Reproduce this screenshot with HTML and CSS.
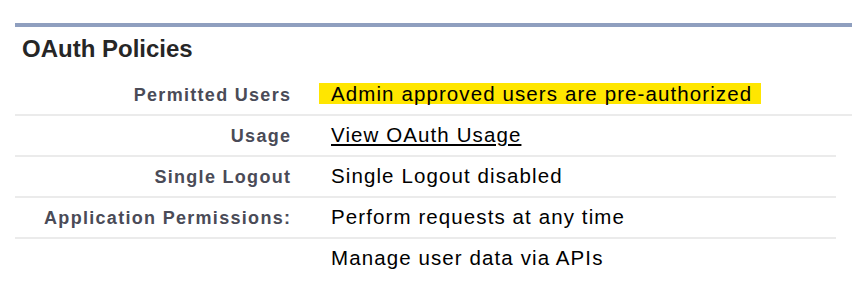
FILE: index.html
```html
<!DOCTYPE html>
<html lang="en">
<head>
  <meta charset="UTF-8" />
  <title>OAuth Policies</title>
  <link rel="stylesheet" href="styles.css">
</head>
<body>

  <div class="section">
    <h2 class="section-title">OAuth Policies</h2>

    <div class="detail-list">
      <div class="detail-row wide">
        <div class="label">Permitted Users</div>
        <div class="value"><span class="highlight">Admin approved users are pre-authorized</span></div>
      </div>
      <div class="detail-row">
        <div class="label">Usage</div>
        <div class="value"><a href="#">View OAuth Usage</a></div>
      </div>
      <div class="detail-row">
        <div class="label">Single Logout</div>
        <div class="value">Single Logout disabled</div>
      </div>
      <div class="detail-row">
        <div class="label">Application Permissions:</div>
        <div class="value">Perform requests at any time</div>
      </div>
      <div class="detail-row last">
        <div class="label"></div>
        <div class="value">Manage user data via APIs</div>
      </div>
    </div>
  </div>

</body>
</html>
```

FILE: styles.css
```css
body {
  margin: 0;
  padding: 23px 0 0 15px;
  background-color: #ffffff;
  font-family: "Liberation Sans", Arial, sans-serif;
  color: #000;
}

.section {
  border-top: 4px solid #8f9fbf;
}

.section-title {
  margin: 0;
  padding: 8px 0 0 7px;
  font-size: 24px;
  line-height: 28px;
  font-weight: bold;
  color: #262626;
}

.detail-list {
  margin-top: 12px;
  margin-right: 16px;
}

.detail-row {
  display: grid;
  grid-template-columns: 275px 1fr;
  align-items: baseline;
  padding: 6px 0 6px;
  border-bottom: 2px solid #ebebeb;
}

.detail-row.wide {
  margin-right: -16px;
}

.detail-row.last {
  border-bottom: none;
}

.label {
  text-align: right;
  font-size: 18px;
  line-height: 25px;
  font-weight: bold;
  letter-spacing: 1.3px;
  margin-right: -1.3px;
  color: #4a4b57;
}

.value {
  padding-left: 41px;
  font-size: 20.5px;
  line-height: 25px;
  letter-spacing: 1.1px;
}

.value a {
  color: #000;
  text-decoration: underline;
}

.highlight {
  display: inline-block;
  height: 21px;
  line-height: 21px;
  margin-left: -12px;
  padding: 0 9px 0 12px;
  background-color: #ffe600;
}
```
